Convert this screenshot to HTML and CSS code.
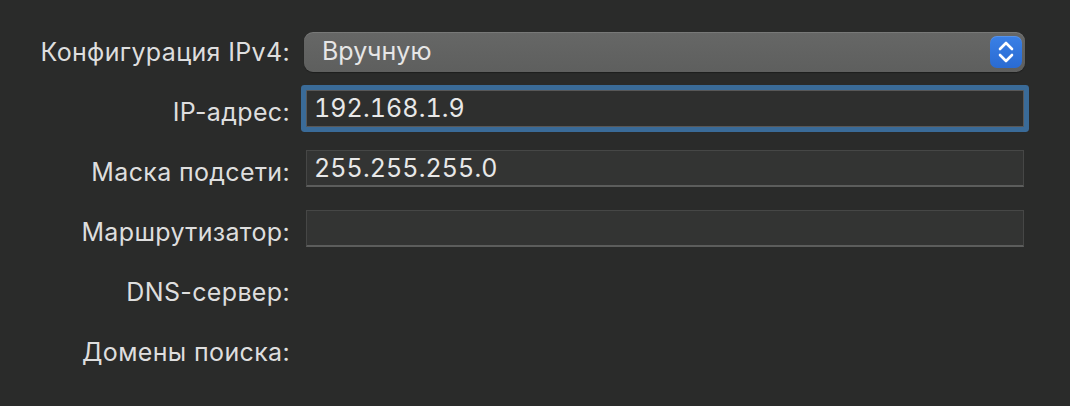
FILE: index.html
```html
<!DOCTYPE html>
<html lang="ru">
<head>
<meta charset="utf-8">
<title>TCP/IP</title>
<link rel="stylesheet" href="styles.css">
</head>
<body>
<div class="form">
  <div class="row">
    <div class="label">Конфигурация IPv4:</div>
    <div class="popup">
      <span class="popup-text">Вручную</span>
      <span class="stepper">
        <svg width="32" height="32" viewBox="0 0 32 32" aria-hidden="true">
          <polyline points="10,13 16,7 22,13" fill="none" stroke="#fff" stroke-width="2.6" stroke-linecap="round" stroke-linejoin="round"/>
          <polyline points="10,19 16,25 22,19" fill="none" stroke="#fff" stroke-width="2.6" stroke-linecap="round" stroke-linejoin="round"/>
        </svg>
      </span>
    </div>
  </div>
  <div class="row">
    <div class="label">IP-адрес:</div>
    <div class="field focused">192.168.1.9</div>
  </div>
  <div class="row">
    <div class="label">Маска подсети:</div>
    <div class="field">255.255.255.0</div>
  </div>
  <div class="row">
    <div class="label">Маршрутизатор:</div>
    <div class="field"></div>
  </div>
  <div class="row">
    <div class="label">DNS-сервер:</div>
  </div>
  <div class="row">
    <div class="label">Домены поиска:</div>
  </div>
</div>
</body>
</html>
```

FILE: styles.css
```css
html, body {
  margin: 0;
  padding: 0;
  background: #2a2b2a;
  width: 1070px;
  height: 406px;
  overflow: hidden;
}

body {
  font-family: Inter, "Noto Sans", "DejaVu Sans", sans-serif;
  color: #dedede;
  font-size: 25px;
}

.form {
  padding-top: 22px;
  display: flex;
  flex-direction: column;
}

.row {
  height: 60px;
  display: flex;
  align-items: center;
  gap: 14px;
}

.label {
  width: 290px;
  text-align: right;
  flex: none;
  letter-spacing: 0.35px;
}

.popup {
  box-sizing: border-box;
  width: 721px;
  height: 40px;
  border-radius: 9px;
  background: linear-gradient(#666766, #5e5f5e);
  box-shadow: inset 0 1px 0 rgba(255,255,255,0.12), 0 1px 1px rgba(0,0,0,0.3);
  display: flex;
  align-items: center;
  justify-content: space-between;
  padding: 0 3px 0 18px;
  color: #e6e6e6;
}

.popup-text {
  padding-bottom: 2px;
}

.stepper {
  width: 32px;
  height: 32px;
  border-radius: 7px;
  background: linear-gradient(#3a80e6, #2a6bd2);
  box-shadow: inset 0 1px 0 rgba(255,255,255,0.15);
  display: flex;
}

.field {
  box-sizing: border-box;
  width: 718px;
  height: 37px;
  margin-left: 2px;
  margin-bottom: 7px;
  background: #333433;
  border: 1px solid #464746;
  border-bottom: 2px solid #5c5d5c;
  padding: 0 7px;
  line-height: 34px;
  color: #e8e8e8;
  font-size: 25px;
  font-variant-numeric: tabular-nums;
  letter-spacing: 0.1px;
}

.field.focused {
  border: 1px solid #585858;
  background: #2e2f2e;
  box-shadow: 0 0 0 5px #3a6b98;
  border-radius: 1px;
}
```
